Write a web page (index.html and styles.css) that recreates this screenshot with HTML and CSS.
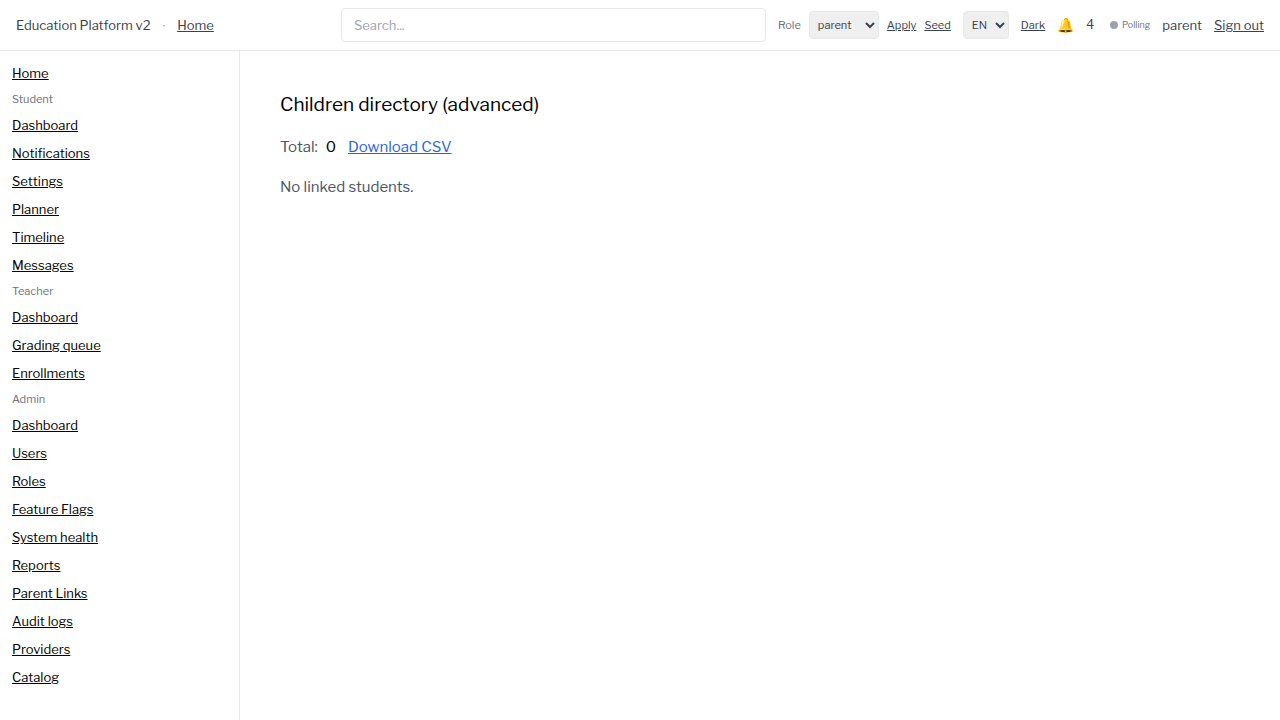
FILE: index.html
```html
<!DOCTYPE html>
<html lang="en">
<head>
<meta charset="utf-8">
<title>Education Platform v2</title>
<link rel="stylesheet" href="styles.css">
</head>
<body>
<header class="topbar">
  <div class="brand"><span>Education Platform v2</span><span class="separator">·</span><a href="#">Home</a></div>
  <input class="search" type="text" placeholder="Search..." aria-label="Search">
  <div class="tools">
    <div class="role">
      <label for="role">Role</label>
      <select id="role" class="select"><option>parent</option><option>student</option><option>teacher</option><option>admin</option></select>
      <button type="button" class="link-button">Apply</button>
      <button type="button" class="link-button">Seed</button>
    </div>
    <select class="select" aria-label="Language"><option>EN</option><option>RU</option></select>
    <button type="button" class="link-button">Dark</button>
    <span class="bell">🔔</span>
    <span class="count">4</span>
    <span class="status"><span class="dot"></span>Polling</span>
    <span>parent</span>
    <a href="#">Sign out</a>
  </div>
</header>
<div class="layout">
  <nav class="sidebar">
    <a href="#">Home</a>
    <div class="group">Student</div>
    <a href="#">Dashboard</a>
    <a href="#">Notifications</a>
    <a href="#">Settings</a>
    <a href="#">Planner</a>
    <a href="#">Timeline</a>
    <a href="#">Messages</a>
    <div class="group">Teacher</div>
    <a href="#">Dashboard</a>
    <a href="#">Grading queue</a>
    <a href="#">Enrollments</a>
    <div class="group">Admin</div>
    <a href="#">Dashboard</a>
    <a href="#">Users</a>
    <a href="#">Roles</a>
    <a href="#">Feature Flags</a>
    <a href="#">System health</a>
    <a href="#">Reports</a>
    <a href="#">Parent Links</a>
    <a href="#">Audit logs</a>
    <a href="#">Providers</a>
    <a href="#">Catalog</a>
  </nav>
  <main class="content">
    <h1 class="title">Children directory (advanced)</h1>
    <div class="summary"><span class="muted">Total:</span><span class="total">0</span><a class="download" href="#">Download CSV</a></div>
    <p class="muted">No linked students.</p>
  </main>
</div>
</body>
</html>
```

FILE: styles.css
```css
* {
  box-sizing: border-box;
  margin: 0;
}

body {
  display: flex;
  flex-direction: column;
  min-height: 100vh;
  background: #fff;
  color: #000;
  font: 15px/24px "Libre Franklin", "Liberation Sans", Arial, sans-serif;
}

a {
  color: inherit;
  text-decoration: underline;
}

.topbar {
  display: flex;
  align-items: center;
  gap: 12px;
  padding: 8px 16px;
  border-bottom: 1px solid #e5e7eb;
  color: #374151;
  font-size: 13px;
  line-height: 20px;
}

.brand {
  display: flex;
  flex: 1;
  gap: 12px;
  white-space: nowrap;
}

.separator {
  color: #9ca3af;
}

.search {
  flex: 0 1 425px;
  min-width: 120px;
  height: 34px;
  padding: 0 12px;
  border: 1px solid #e5e7eb;
  border-radius: 4px;
  background: #fff;
  color: inherit;
  font: inherit;
}

.search::placeholder {
  color: #9ca3af;
}

.tools {
  display: flex;
  align-items: center;
  gap: 12px;
  white-space: nowrap;
}

.role {
  display: flex;
  align-items: center;
  gap: 8px;
  color: #6b7280;
  font-size: 11px;
}

.select {
  height: 28px;
  padding: 4px;
  border: 1px solid #e5e7eb;
  border-radius: 4px;
  background: #efefef;
  color: #374151;
  font: inherit;
  font-size: 11px;
  line-height: 16px;
}

.link-button {
  padding: 0;
  border: 0;
  background: none;
  color: #374151;
  font: inherit;
  font-size: 11px;
  line-height: 16px;
  text-decoration: underline;
}

.bell {
  font-size: 14px;
}

.count {
  font-size: 12px;
}

.status {
  display: flex;
  align-items: center;
  gap: 4px;
  padding-left: 4px;
  color: #6b7280;
  font-size: 9px;
}

.dot {
  width: 8px;
  height: 8px;
  border-radius: 50%;
  background: #9ca3af;
}

.layout {
  display: flex;
  flex: 1;
}

.sidebar {
  display: flex;
  flex-direction: column;
  align-items: flex-start;
  gap: 8px;
  width: 240px;
  padding: 12px;
  border-right: 1px solid #e5e7eb;
  font-size: 13px;
  line-height: 20px;
}

.group {
  color: #6b7280;
  font-size: 11px;
  line-height: 16px;
}

.content {
  display: flex;
  flex: 1;
  flex-direction: column;
  gap: 16px;
  padding: 40px;
}

.title {
  font-size: 19px;
  font-weight: 400;
  line-height: 28px;
}

.summary {
  display: flex;
}

.muted {
  color: #4b5563;
}

.total {
  margin: 0 12px 0 8px;
}

.download {
  color: #2563eb;
}
```
